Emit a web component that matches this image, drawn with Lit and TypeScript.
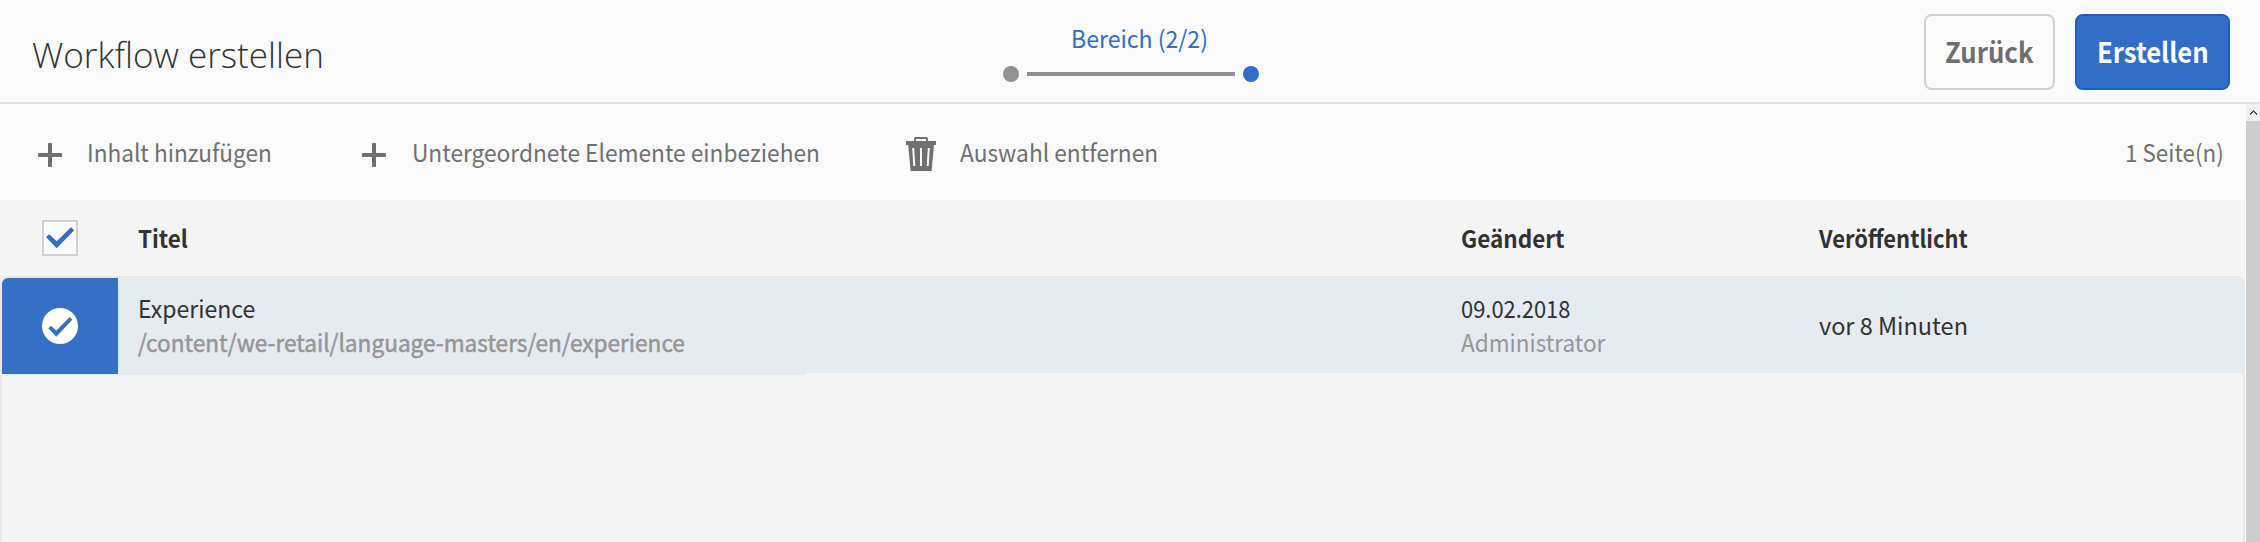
import { LitElement, html, css, svg } from "lit";
import { customElement, property, query } from "lit/decorators.js";

/** One line of text, condensed or widened to the given advance width. */
@customElement("fit-text")
class FitText extends LitElement {
  @property() text = "";
  @property({ type: Number }) width = 0;
  @property({ type: Number }) shift = 0;
  @query("span") private span!: HTMLSpanElement;

  static styles = css`
    :host { display: block; white-space: nowrap; }
    span { display: inline-block; transform-origin: 0 0; vertical-align: top; }
  `;

  updated() {
    this.style.width = `${this.width}px`;
    this.style.marginLeft = `${this.shift}px`;
    const natural = this.span.offsetWidth;
    if (natural) this.span.style.transform = `scaleX(${this.width / natural})`;
  }

  render() {
    return html`<span>${this.text}</span>`;
  }
}

const plusIcon = svg`<svg class="icon" width="24" height="24" viewBox="0 0 24 24">
  <path d="M11 0h2a1 1 0 0 1 1 1v9h9a1 1 0 0 1 1 1v2a1 1 0 0 1-1 1h-9v9a1 1 0 0 1-1 1h-2a1 1 0 0 1-1-1v-9H1a1 1 0 0 1-1-1v-2a1 1 0 0 1 1-1h9V1a1 1 0 0 1 1-1z" fill="#707070"/>
</svg>`;

const trashIcon = svg`<svg class="icon" width="30" height="34" viewBox="0 0 30 34">
  <path d="M9 5V1.8Q9 1 9.8 1H20.2Q21 1 21 1.8V5" fill="none" stroke="#707070" stroke-width="2"/>
  <path d="M0 4H30V8H28L25.6 34H4.6L2.2 8H0z" fill="#707070"/>
  <path d="M7.2 11L8.3 29M15 11V29M22.8 11L21.7 29" stroke="#fafafa" stroke-width="2" fill="none"/>
</svg>`;

@customElement("app-root")
class AppRoot extends LitElement {
  static styles = css`
    :host {
      display: flex; flex-direction: column; width: 2260px; height: 542px; overflow: hidden;
      background: #fafafa; color: #323232;
      font: 400 24px/35px "Noto Sans CJK SC", "Noto Sans", sans-serif;
    }
    * { box-sizing: border-box; }
    svg { display: block; flex: none; }
    header {
      display: grid; grid-template-columns: 1003px 256px 1fr; flex: none;
      height: 104px; border-bottom: 2px solid #e0e0e0;
    }
    .title { padding: 30px 0 0 32px; font: 300 35.5px/48px "Open Sans", sans-serif; }
    .wizard { padding-top: 20px; color: #326ec8; }
    .steps { display: flex; align-items: center; gap: 8px; margin-top: 11px; }
    .dot { width: 16px; height: 16px; border-radius: 50%; background: #919191; }
    .dot.current { background: #326ec8; }
    .line { flex: 1; height: 4px; background: #919191; }
    .buttons { display: flex; justify-content: flex-end; gap: 20px; padding: 14px 30px 0 0; }
    .button {
      height: 76px; padding: 0 0 2px; border: 2px solid #d0d0d0; border-radius: 8px;
      background: transparent; color: #6e6e6e; text-align: left;
      font: 700 27.5px/40px "Noto Sans CJK SC", "Noto Sans", sans-serif;
      display: flex; align-items: center;
    }
    .back { width: 131px; }
    .create { width: 155px; border-color: #1e5fbe; background: #326ec8; color: #fff; }
    .body { display: flex; flex: 1; min-height: 0; }
    .content { width: 2245px; display: flex; flex-direction: column; }
    .toolbar {
      display: flex; flex: none; height: 96px; align-items: flex-start;
      padding: 0 0 0 38px; color: #707070;
    }
    .action { display: flex; align-items: flex-start; }
    .action fit-text { padding-top: 30px; }
    .action .icon { margin-top: 39px; }
    .add { width: 324px; }
    .include { width: 544px; }
    .remove .icon { margin-top: 33px; }
    .count { margin-left: auto; padding: 30px 21.5px 0 0; }
    .columns, .row { display: grid; grid-template-columns: 138px 1323px 358px 1fr; flex: none; }
    .columns { height: 76px; padding-top: 20px; background: #f4f4f4; font-weight: 700; }
    .checkbox { width: 36px; height: 36px; margin-left: 42px; border: 2px solid #d0d0d0; background: #fafafa; }
    .tablewrap { flex: 1; background: #f4f4f4; }
    .table {
      height: 100%; border: 2px solid #e8e8e8; border-bottom: 0;
      border-radius: 8px 8px 0 0; overflow: hidden;
    }
    .row {
      grid-template-columns: 136px 1323px 358px 1fr; height: 96px;
      background: linear-gradient(#e6eaf1, #e6eaf1) 0 0 / 100% 95px no-repeat,
        linear-gradient(#e6eaf1, #e6eaf1) 0 95px / 804px 1px no-repeat;
    }
    .underline { width: 804px; height: 1px; background: #eaeaea; }
    .select { width: 116px; height: 96px; padding: 30px 0 0 40px; background: #3570c6; }
    .cell { padding-top: 12px; }
    .cell fit-text + fit-text { margin-top: -1px; }
    .cell.single { padding-top: 29px; }
    .muted { color: #969696; }
    .path { -webkit-text-stroke: 0.5px #969696; }
    .scrollbar { width: 15px; border-left: 1px solid #fff; display: flex; flex-direction: column; }
    .up { height: 17px; background: #f0f0f0; padding: 6px 0 0 4px; }
    .thumb { flex: 1; background: #cdcdcd; }
  `;

  private line(text: string, width: number, shift = 0, cls = "") {
    return html`<fit-text class=${cls} .text=${text} .width=${width} .shift=${shift}></fit-text>`;
  }

  render() {
    return html`
      <header>
        <div class="title">${this.line("Workflow erstellen", 292.3)}</div>
        <div class="wizard">
          ${this.line("Bereich (2/2)", 136.5, 68)}
          <div class="steps"><i class="dot"></i><i class="line"></i><i class="dot current"></i></div>
        </div>
        <div class="buttons">
          <button class="button back">${this.line("Zurück", 88, 18.7)}</button>
          <button class="button create">${this.line("Erstellen", 112, 19.7)}</button>
        </div>
      </header>
      <div class="body">
        <div class="content">
          <div class="toolbar">
            <div class="action add">${plusIcon}${this.line("Inhalt hinzufügen", 184.8, 25.4)}</div>
            <div class="action include">${plusIcon}${this.line("Untergeordnete Elemente einbeziehen", 407.7, 26)}</div>
            <div class="action remove">${trashIcon}${this.line("Auswahl entfernen", 198, 24)}</div>
            <div class="count">${this.line("1 Seite(n)", 99)}</div>
          </div>
          <div class="columns">
            <div class="checkbox">
              <svg width="32" height="32" viewBox="0 0 32 32">
                <path d="M2 15L5.3 12.3L12.7 19.3L27 5.3L30.2 8.2L12.7 26.3z" fill="#326ec8"/>
              </svg>
            </div>
            ${this.line("Titel", 49.5, -0.5)}
            ${this.line("Geändert", 103.2, -0.2)}
            ${this.line("Veröffentlicht", 149)}
          </div>
          <div class="tablewrap">
            <div class="table">
              <div class="row">
                <div class="select">
                  <svg width="36" height="36" viewBox="0 0 36 36">
                    <circle cx="18" cy="18" r="18" fill="#fff"/>
                    <path d="M6.3 20.3L9 17.7L14.3 22.5L27.7 9L30.3 11.7L14.3 28.7z" fill="#3570c6"/>
                  </svg>
                </div>
                <div class="cell">
                  ${this.line("Experience", 117, -0.5)}
                  ${this.line("/content/we-retail/language-masters/en/experience", 546.6, 0.3, "muted path")}
                </div>
                <div class="cell">
                  ${this.line("09.02.2018", 109.5, -0.2)}
                  ${this.line("Administrator", 144.7, 0, "muted")}
                </div>
                <div class="cell single">${this.line("vor 8 Minuten", 148.7)}</div>
              </div>
              <div class="underline"></div>
            </div>
          </div>
        </div>
        <div class="scrollbar">
          <div class="up">
            <svg width="7" height="6" viewBox="0 0 7 6" shape-rendering="crispEdges">
              <path d="M3 0h1v1h1v1h1v1h1v2H6V4H5V3H4V2H3v1H2v1H1v1H0V3h1V2h1V1h1z" fill="#505050"/>
            </svg>
          </div>
          <div class="thumb"></div>
        </div>
      </div>
    `;
  }
}
